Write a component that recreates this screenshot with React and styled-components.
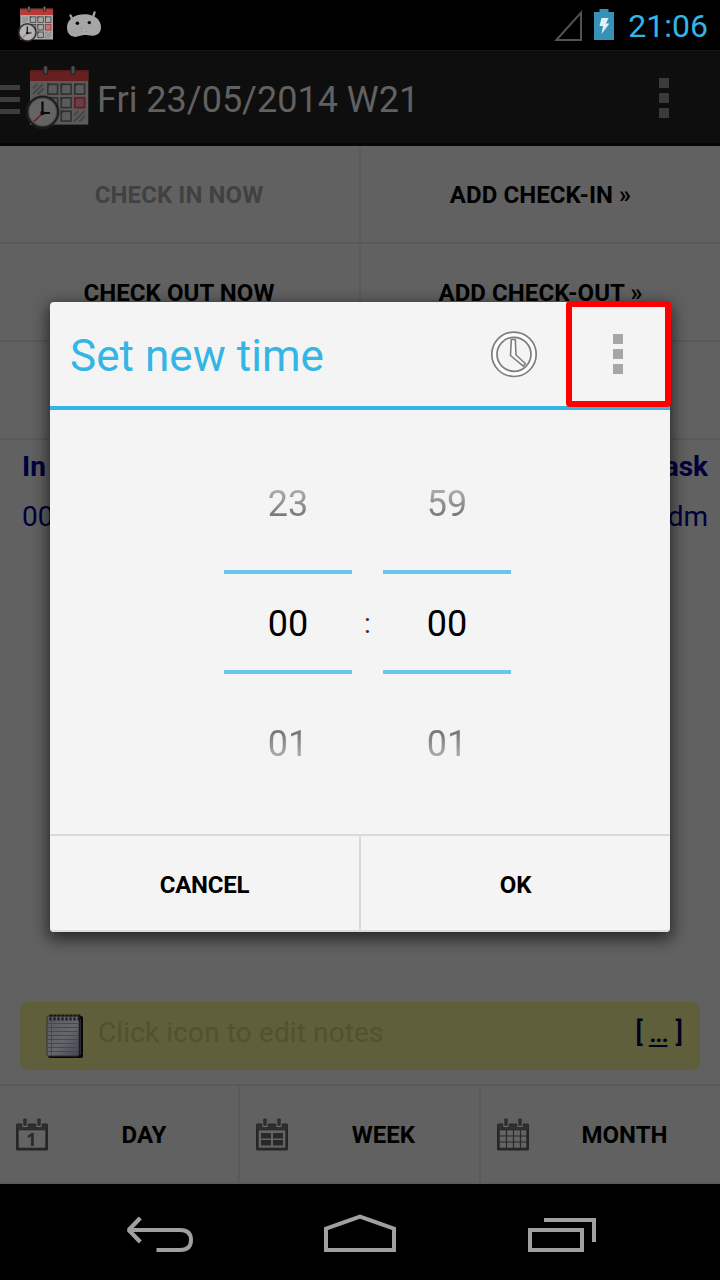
import React from 'react';
import styled, { createGlobalStyle } from 'styled-components';

const GlobalStyle = createGlobalStyle`
  * { box-sizing: border-box; }
  body { margin: 0; background: #000; }
  svg { display: block; flex: none; }
`;

const Screen = styled.div`
  position: relative;
  width: 720px;
  height: 1280px;
  display: flex;
  flex-direction: column;
  overflow: hidden;
  background: #616161;
  font-family: Roboto, 'Noto Sans', sans-serif;
`;

const StatusBar = styled.header`
  height: 50px;
  flex: none;
  display: flex;
  align-items: flex-start;
  justify-content: space-between;
  padding: 5px 12px 0 18px;
  background: #000;
`;

const StatusGroup = styled.div`
  display: flex;
  align-items: flex-start;
`;

const StatusClock = styled.span`
  margin-left: 14px;
  font-size: 32px;
  line-height: 42px;
  color: #33b5e5;
`;

const ActionBar = styled.div`
  height: 96px;
  flex: none;
  display: flex;
  align-items: center;
  border-top: 1px solid #151515;
  border-bottom: 3px solid #070707;
  background: #0e0e0e;
`;

const DrawerHandle = styled.div`
  width: 20px;
  height: 29px;
  margin-top: 5px;
  display: flex;
  flex-direction: column;
  justify-content: space-between;
`;

const DrawerLine = styled.div`
  height: 5px;
  background: #3d3d3d;
`;

const ActionIcon = styled.div`
  margin: 0 7px 0 6px;
`;

const ActionTitle = styled.h1`
  flex: 1;
  margin: 6px 0 0;
  font-size: 36px;
  font-weight: 400;
  line-height: 44px;
  color: #616161;
`;

const Dots = styled.div`
  width: 10px;
  display: flex;
  flex-direction: column;
  gap: 5px;
`;

const Dot = styled.div`
  height: 10px;
  background: ${(p) => p.$color};
`;

const ActionOverflow = styled.div`
  margin: 1px 51px 0 0;
`;

const PunchGrid = styled.div`
  display: grid;
  grid-template-columns: 361px 359px;
  grid-auto-rows: 98px;
`;

const PunchButton = styled.button`
  display: flex;
  align-items: center;
  justify-content: center;
  padding: 2px ${(p) => (p.$divided ? 1 : 0)}px 0 0;
  border: 0;
  border-bottom: 2px solid #595959;
  border-right: ${(p) => (p.$divided ? '2px solid #5b5b5b' : '0')};
  background: none;
  font: 700 24px Roboto, sans-serif;
  letter-spacing: 0.08px;
  color: ${(p) => (p.disabled ? '#414141' : '#000')};
`;

const LogTable = styled.div`
  flex: 1;
  padding: 1px 12px 0 22px;
`;

const LogRow = styled.div`
  height: 50px;
  display: flex;
  align-items: center;
  justify-content: space-between;
  font-size: 28px;
  font-weight: ${(p) => (p.$head ? 700 : 400)};
  color: #00003c;
`;

const NotesBar = styled.div`
  height: 68px;
  flex: none;
  display: flex;
  align-items: center;
  margin: 0 20px 14px;
  padding: 0 17px 0 25px;
  border-radius: 7px;
  background: #5f5f3c;
`;

const NotesHint = styled.span`
  flex: 1;
  margin: -6px 0 0 13px;
  font-size: 28px;
  line-height: 34px;
  letter-spacing: 0.12px;
  color: #52522c;
`;

const NotesMore = styled.span`
  margin-top: -6px;
  font-size: 28px;
  font-weight: 500;
  line-height: 34px;
  color: #00001f;

  u {
    margin: 0 1px 0 -1px;
    letter-spacing: -1.6px;
    text-decoration-thickness: 2px;
    text-underline-offset: 3px;
  }
`;

const Tabs = styled.nav`
  height: 100px;
  flex: none;
  display: grid;
  grid-template-columns: 240px 241px 239px;
  border-top: 2px solid #595959;
  border-bottom: 2px solid #5b5b5b;
`;

const Tab = styled.button`
  display: flex;
  align-items: center;
  padding: 0 0 0 16px;
  border: 0;
  border-right: ${(p) => (p.$divided ? '2px solid #5a5a5a' : '0')};
  background: none;
  font: 700 24px Roboto, sans-serif;
  color: #000;
`;

const TabLabel = styled.span`
  flex: 1;
  padding-top: 1px;
  padding-left: ${(p) => p.$inset || 0}px;
  text-align: center;
`;

const NavBar = styled.footer`
  height: 96px;
  flex: none;
  display: flex;
  align-items: center;
  justify-content: space-between;
  padding: 4px 122px 0 124px;
  background: #000;
`;

const Dialog = styled.section`
  position: absolute;
  left: 50px;
  top: 302px;
  width: 620px;
  height: 630px;
  display: flex;
  flex-direction: column;
  border-radius: 4px;
  background: #f4f4f4;
  box-shadow: 0 5px 16px 2px rgba(0, 0, 0, 0.62), inset 0 -2px 0 #dcdcdc;
`;

const DialogHeader = styled.div`
  height: 108px;
  flex: none;
  display: flex;
  align-items: center;
  padding-left: 20px;
  border-bottom: 4px solid #33b5e5;
`;

const DialogTitle = styled.h2`
  flex: 1;
  margin: 4px 0 0;
  font-size: 44px;
  font-weight: 400;
  line-height: 52px;
  letter-spacing: 0.05px;
  color: #33b5e5;
`;

const DialogMenu = styled.div`
  width: 105px;
  display: flex;
  justify-content: center;
  margin-left: 27px;
`;

const Highlight = styled.div`
  position: absolute;
  left: 516px;
  top: -1px;
  width: 105px;
  height: 106px;
  border: 6px solid #fe0000;
  border-radius: 4px;
`;

const Pickers = styled.div`
  flex: 1;
  display: flex;
  align-items: center;
  justify-content: center;
  padding-left: 15px;
`;

const Wheel = styled.div`
  width: 128px;
  height: 344px;
  display: flex;
  flex-direction: column;
  align-items: center;
  justify-content: space-between;
  font-size: 36px;
  line-height: 40px;
`;

const Neighbor = styled.span`
  height: 104px;
  padding: 34px 0 0;
  color: transparent;
  background: ${(p) =>
    p.$after
      ? 'linear-gradient(#6a6a6a 34px, #777 42px, #b4b4b4 70px)'
      : 'linear-gradient(#b0b0b0 38px, #747474 68px)'};
  background-clip: text;
  -webkit-background-clip: text;
`;

const Current = styled.span`
  width: 128px;
  height: 104px;
  padding: 32px 0 0;
  border-top: 4px solid #67c6ea;
  border-bottom: 4px solid #67c6ea;
  line-height: 36px;
  text-align: center;
  color: #000;
`;

const Colon = styled.span`
  width: 31px;
  padding-top: 4px;
  text-align: center;
  font-size: 28px;
  line-height: 32px;
  color: #333;
`;

const DialogButtons = styled.div`
  height: 98px;
  flex: none;
  display: grid;
  grid-template-columns: 311px 309px;
  border-top: 2px solid #dadada;
`;

const DialogButton = styled.button`
  padding: 2px 0 0;
  border: 0;
  border-right: ${(p) => (p.$divided ? '2px solid #dadada' : '0')};
  background: none;
  font: 700 24px Roboto, sans-serif;
  letter-spacing: -0.25px;
  color: #000;
`;

const BRIGHT = { red: '#b83a36', redTop: '#8f2a28', paper: '#a9a9a9', line: '#4b4b4b', rim: '#22241f', face: '#b4b4b4', ring: '#777', today: '#bd3434', hatch: '#888' };
const DIM = { red: '#671f1f', redTop: '#551a1a', paper: '#5b5b5b', line: '#303030', rim: '#191a18', face: '#646464', ring: '#4c4c4c', today: '#6c1c1f', hatch: '#454545' };

function ScheduleIcon({ width, height, tone }) {
  const cells = [[21, 19.5], [34.5, 19.5], [48, 19.5], [21, 33], [34.5, 33], [34.5, 46.5]];
  return (
    <svg width={width} height={height} viewBox="0 0 64 66">
      <rect x="4" y="6" width="58.3" height="54.600" fill={tone.paper} />
      <rect x="4" y="6" width="58.3" height="11" fill={tone.red} />
      <rect x="4" y="6" width="58.3" height="1.2" fill={tone.redTop} />
      {cells.map(([x, y]) => (
        <g key={`${x}-${y}`}>
          <rect x={x + 0.8} y={y + 0.8} width="9.800" height="9.800" fill="none" stroke={tone.line} strokeWidth="1.6" />
          <path d={`M${x} ${y}h4.200l-4.200 4.200z`} fill={tone.line} />
        </g>
      ))}
      <rect x="48.800" y="33.800" width="9.800" height="9.800" fill={tone.today} fillOpacity=".35" stroke={tone.today} strokeWidth="1.800" />
      <path d="M48 33h4.200l-4.200 4.200z" fill={tone.today} />
      <g stroke={tone.hatch} strokeWidth="2">
        <path d="M7 24.500l4.500-4.500M7 30l10-10M11.500 30.500l6.500-6.500" />
        <path d="M48 51.500l4.500-4.500M48 57.500l10.500-10.500M53 58l6-6" />
      </g>
      {[19.5, 47].map((x) => (
        <g key={x}>
          <rect x={x - 2.5} y="2" width="5" height="9" rx="2.500" fill="#242626" />
          <rect x={x - 1.3} y="2" width="2.600" height="7.500" rx="1.300" fill={tone.ring} />
        </g>
      ))}
      <circle cx="16.700" cy="48" r="17.300" fill={tone.line} fillOpacity=".4" />
      <circle cx="16.700" cy="48" r="16.300" fill={tone.rim} />
      <circle cx="16.700" cy="48" r="14.500" fill={tone.ring} />
      <circle cx="16.700" cy="48" r="13.300" fill={tone.face} />
      <path d="M17 49l-9 8.500" stroke={tone.today} strokeWidth="1.500" />
      <path d="M16.500 37.500v11.500h7.500" fill="none" stroke="#0b0b0b" strokeWidth="2.200" />
      <circle cx="16.500" cy="49" r="2.200" fill="#0b0b0b" />
    </svg>
  );
}

function DroidIcon() {
  return (
    <svg width="36" height="28" viewBox="0 0 36 28">
      <g fill="none" stroke="#a3a3a3" strokeWidth="2.400" strokeLinecap="round">
        <path d="M4.500 5.500l2.500 5M28.500 2.500l-1.500 5" />
      </g>
      <path d="M12 5c4-1.200 10-1.200 14 .4C32 7.500 35 12 35 17.500c0 5-3.500 8-8 8.200-3.500.2-5.500-.8-9-.7-4 .3-6 2.300-10 1.800C3.500 26 1 22.500 1 17.500 1 11 6 6.500 12 5z" fill="#a6a6a6" />
      <circle cx="11.400" cy="13.300" r="1.700" fill="#000" />
      <circle cx="23.300" cy="12.600" r="1.700" fill="#000" />
      <path d="M15 18.500h1M20 21.500h1M15 21.500h1" stroke="#8a8a8a" />
    </svg>
  );
}

function SignalIcon() {
  return (
    <svg width="30" height="37" viewBox="0 0 30 37">
      <path d="M4.400 35L29 7.500V35z" fill="none" stroke="#525252" strokeWidth="2" />
    </svg>
  );
}

function BatteryIcon() {
  return (
    <svg width="20" height="31" viewBox="0 0 20 31">
      <path d="M5.500 0h9v3H20v28H0V3h5.500z" fill="#3792b8" />
      <path d="M7.500 9h7l-2.500 5.500h3.500L7.500 25l1.500-8H5.500z" fill="#e0f0f7" />
    </svg>
  );
}

function NotepadIcon() {
  return (
    <svg width="40" height="46" viewBox="0 0 40 46">
      <defs>
        <linearGradient id="sheet" x1="0" y1="0" x2="1" y2="1">
          <stop offset="0" stopColor="#595b60" />
          <stop offset=".55" stopColor="#65676d" />
          <stop offset="1" stopColor="#45474f" />
        </linearGradient>
      </defs>
      <rect x="3" y="3" width="35" height="42" rx="2" fill="#08080b" />
      <rect x="2" y="3" width="32" height="40" rx="1.500" fill="url(#sheet)" stroke="#303032" />
      <path d="M3 10.500h30M3 14.500h30M3 18.500h30M3 22.500h30M3 26.500h30M3 30.500h30M3 34.500h30M3 38.500h30" stroke="#3a4775" />
      <path d="M6.500 8v35" stroke="#65384b" />
      <path d="M4.500 2.500h31" stroke="#151515" strokeWidth="2" strokeDasharray="3 1" />
      <path d="M4.500 6h31" stroke="#151515" strokeWidth="3" strokeDasharray="2 2" />
      <path d="M35.500 6v36" stroke="#3a3a40" strokeWidth=".7" />
    </svg>
  );
}

function CalendarIcon({ kind }) {
  return (
    <svg width="32" height="33" viewBox="0 0 32 33">
      <rect x="0" y="5.500" width="32" height="27" rx="1.500" fill="#262626" />
      <rect x="1" y="6.500" width="30" height="5" fill="#303030" />
      <rect x="2.700" y="12.300" width="26.600" height="17.400" fill="#646464" />
      {[9, 23].map((x) => (
        <g key={x}>
          <rect x={x - 2.6} y="4" width="5.200" height="5" rx="1.500" fill="#777" />
          <rect x={x - 1.8} y=".5" width="3.600" height="7.500" rx=".8" fill="#2f2f2f" />
        </g>
      ))}
      {kind === 'day' && (
        <text x="15.500" y="27.500" textAnchor="middle" fontFamily="Open Sans, sans-serif" fontWeight="700" fontSize="18" fill="#292929">1</text>
      )}
      {kind === 'week' && (
        <g fill="#292929">
          <rect x="5" y="15" width="10" height="5.500" />
          <rect x="17" y="15" width="10" height="5.500" />
          <rect x="5" y="22" width="10" height="5.500" />
          <rect x="17" y="22" width="10" height="5.500" />
        </g>
      )}
      {kind === 'month' && (
        <path d="M9.500 12v18M16.500 12v18M23.500 12v18M2 18h28M2 24h28" stroke="#292929" strokeWidth="1.200" fill="none" />
      )}
    </svg>
  );
}

function AnalogClockIcon() {
  return (
    <svg width="48" height="48" viewBox="0 0 48 48" fill="none" stroke="#7e7e7e">
      <circle cx="24" cy="24.300" r="19.500" stroke="#fdfdfd" strokeWidth="4" />
      <circle cx="24" cy="24.300" r="22.200" strokeWidth="1.700" />
      <circle cx="24" cy="24.300" r="17" strokeWidth="1.700" />
      <path d="M21.300 9.500h4l.7 15.500 9.300 8.500-2 2.700L20.500 25.500z" fill="#fdfdfd" strokeWidth="1.600" strokeLinejoin="round" />
    </svg>
  );
}

function BackIcon() {
  return (
    <svg width="70" height="40" viewBox="0 0 70 40" fill="none" stroke="#a0a0a0" strokeWidth="4">
      <path d="M5 16h51q11 0 11 10t-11 10H32.500" />
      <path d="M16.300 4L4.700 16l11.600 12" strokeWidth="4.200" strokeLinejoin="bevel" />
    </svg>
  );
}

function HomeIcon() {
  return (
    <svg width="74" height="40" viewBox="0 0 74 40" fill="none" stroke="#a0a0a0" strokeWidth="4">
      <path d="M2 36V14.700L36 2.500l34 12.200V36z" />
    </svg>
  );
}

function RecentsIcon() {
  return (
    <svg width="70" height="40" viewBox="0 0 70 40" fill="none" stroke="#a0a0a0" strokeWidth="4">
      <path d="M2 16h52v20H2zM16 6h50v22" />
    </svg>
  );
}

function OverflowDots({ color }) {
  return (
    <Dots>
      <Dot $color={color} />
      <Dot $color={color} />
      <Dot $color={color} />
    </Dots>
  );
}

function TimeWheel({ before, value, after }) {
  return (
    <Wheel>
      <Neighbor>{before}</Neighbor>
      <Current>{value}</Current>
      <Neighbor $after>{after}</Neighbor>
    </Wheel>
  );
}

const DroidSlot = styled.div`
  margin: 5px 0 0 12px;
`;

const BatterySlot = styled.div`
  margin: 4px 0 0 12px;
`;

export default function App() {
  return (
    <Screen>
      <GlobalStyle />
      <StatusBar>
        <StatusGroup>
          <ScheduleIcon width={36} height={38} tone={BRIGHT} />
          <DroidSlot><DroidIcon /></DroidSlot>
        </StatusGroup>
        <StatusGroup>
          <SignalIcon />
          <BatterySlot><BatteryIcon /></BatterySlot>
          <StatusClock>21:06</StatusClock>
        </StatusGroup>
      </StatusBar>

      <ActionBar>
        <DrawerHandle>
          <DrawerLine />
          <DrawerLine />
          <DrawerLine />
        </DrawerHandle>
        <ActionIcon><ScheduleIcon width={64} height={66} tone={DIM} /></ActionIcon>
        <ActionTitle>Fri 23/05/2014 W21</ActionTitle>
        <ActionOverflow><OverflowDots color="#3b3b3b" /></ActionOverflow>
      </ActionBar>

      <PunchGrid>
        <PunchButton $divided disabled>CHECK IN NOW</PunchButton>
        <PunchButton>ADD CHECK-IN »</PunchButton>
        <PunchButton $divided>CHECK OUT NOW</PunchButton>
        <PunchButton>ADD CHECK-OUT »</PunchButton>
        <PunchButton $divided />
        <PunchButton />
      </PunchGrid>

      <LogTable>
        <LogRow $head><span>In</span><span>Task</span></LogRow>
        <LogRow><span>00</span><span>Adm</span></LogRow>
      </LogTable>

      <NotesBar>
        <NotepadIcon />
        <NotesHint>Click icon to edit notes</NotesHint>
        <NotesMore>[ <u>...</u> ]</NotesMore>
      </NotesBar>

      <Tabs>
        <Tab $divided><CalendarIcon kind="day" /><TabLabel $inset={2}>DAY</TabLabel></Tab>
        <Tab $divided><CalendarIcon kind="week" /><TabLabel>WEEK</TabLabel></Tab>
        <Tab><CalendarIcon kind="month" /><TabLabel>MONTH</TabLabel></Tab>
      </Tabs>

      <NavBar>
        <BackIcon />
        <HomeIcon />
        <RecentsIcon />
      </NavBar>

      <Dialog>
        <DialogHeader>
          <DialogTitle>Set new time</DialogTitle>
          <AnalogClockIcon />
          <DialogMenu><OverflowDots color="#a6a6a6" /></DialogMenu>
          <Highlight />
        </DialogHeader>
        <Pickers>
          <TimeWheel before="23" value="00" after="01" />
          <Colon>:</Colon>
          <TimeWheel before="59" value="00" after="01" />
        </Pickers>
        <DialogButtons>
          <DialogButton $divided>CANCEL</DialogButton>
          <DialogButton>OK</DialogButton>
        </DialogButtons>
      </Dialog>
    </Screen>
  );
}
